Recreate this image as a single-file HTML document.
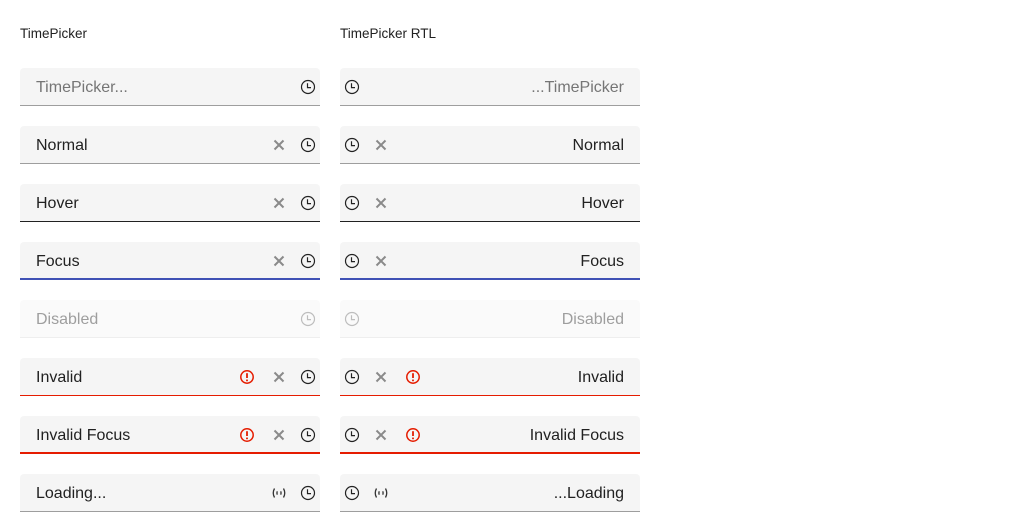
<!DOCTYPE html>
<html><head><meta charset="utf-8"><style>
*{margin:0;padding:0;box-sizing:border-box}
body{width:1024px;height:532px;background:#fff;font-family:"Liberation Sans",Arial,sans-serif;position:relative;overflow:hidden}
.lbl{position:absolute;top:26px;font-size:13.5px;color:#212121}
.f{position:absolute;width:300px;height:38px;background:#f5f5f5;border-radius:4px 4px 0 0;border-bottom:1px solid #9e9e9e;font-size:16px;color:#212121}
.f .t{position:absolute;top:11px;line-height:18px}
.l .t{left:16px}.r .t{right:16px}
.f svg{position:absolute;top:11px;width:16px;height:16px}
.hover{border-bottom-color:#212121}
.focus{border-bottom:2px solid #3f51b5}
.inv{border-bottom-color:#e51c00}
.invf{border-bottom:2px solid #e51c00}
.dis{background:#fafafa;border-bottom-color:#eee;color:#9e9e9e}
.ph{color:#757575}
</style></head><body>
<svg width="0" height="0" style="position:absolute">
<defs>
<symbol id="clk" viewBox="0 0 16 16"><circle cx="8" cy="8" r="6.5" fill="none" stroke="currentColor" stroke-width="1.2"/><path d="M7.5 4.2V8.6H11" fill="none" stroke="currentColor" stroke-width="1.2"/></symbol>
<symbol id="x" viewBox="0 0 16 16"><path d="M3.5 3.5L12.5 12.5M12.5 3.5L3.5 12.5" stroke="#8a8a8a" stroke-width="2"/></symbol>
<symbol id="err" viewBox="0 0 16 16"><circle cx="8" cy="8" r="6.2" fill="none" stroke="#e51c00" stroke-width="1.5"/><path d="M8 4.2V9" stroke="#e51c00" stroke-width="1.8"/><circle cx="8" cy="11.4" r="1" fill="#e51c00"/></symbol>
<symbol id="ld" viewBox="0 0 16 16"><path d="M3.5 3.5Q1 8 3.5 12.5M12.5 3.5Q15 8 12.5 12.5M6.3 6.3Q5.5 8 6.3 9.7M9.7 6.3Q10.5 8 9.7 9.7" fill="none" stroke="#333" stroke-width="1.3"/></symbol>
</defs></svg>
<div class="lbl" style="left:20px">TimePicker</div>
<div class="lbl" style="left:340px">TimePicker RTL</div>

<div class="f l" style="left:20px;top:68px"><span class="t ph">TimePicker...</span><svg style="left:280px;color:#222"><use href="#clk"/></svg></div>
<div class="f l" style="left:20px;top:126px"><span class="t">Normal</span><svg style="left:251px"><use href="#x"/></svg><svg style="left:280px;color:#222"><use href="#clk"/></svg></div>
<div class="f l hover" style="left:20px;top:184px"><span class="t">Hover</span><svg style="left:251px"><use href="#x"/></svg><svg style="left:280px;color:#222"><use href="#clk"/></svg></div>
<div class="f l focus" style="left:20px;top:242px"><span class="t">Focus</span><svg style="left:251px"><use href="#x"/></svg><svg style="left:280px;color:#222"><use href="#clk"/></svg></div>
<div class="f l dis" style="left:20px;top:300px"><span class="t">Disabled</span><svg style="left:280px;color:#bdbdbd"><use href="#clk"/></svg></div>
<div class="f l inv" style="left:20px;top:358px"><span class="t">Invalid</span><svg style="left:219px"><use href="#err"/></svg><svg style="left:251px"><use href="#x"/></svg><svg style="left:280px;color:#222"><use href="#clk"/></svg></div>
<div class="f l invf" style="left:20px;top:416px"><span class="t">Invalid Focus</span><svg style="left:219px"><use href="#err"/></svg><svg style="left:251px"><use href="#x"/></svg><svg style="left:280px;color:#222"><use href="#clk"/></svg></div>
<div class="f l" style="left:20px;top:474px"><span class="t">Loading...</span><svg style="left:251px"><use href="#ld"/></svg><svg style="left:280px;color:#222"><use href="#clk"/></svg></div>

<div class="f r" style="left:340px;top:68px"><span class="t ph">...TimePicker</span><svg style="left:4px;color:#222"><use href="#clk"/></svg></div>
<div class="f r" style="left:340px;top:126px"><span class="t">Normal</span><svg style="left:4px;color:#222"><use href="#clk"/></svg><svg style="left:33px"><use href="#x"/></svg></div>
<div class="f r hover" style="left:340px;top:184px"><span class="t">Hover</span><svg style="left:4px;color:#222"><use href="#clk"/></svg><svg style="left:33px"><use href="#x"/></svg></div>
<div class="f r focus" style="left:340px;top:242px"><span class="t">Focus</span><svg style="left:4px;color:#222"><use href="#clk"/></svg><svg style="left:33px"><use href="#x"/></svg></div>
<div class="f r dis" style="left:340px;top:300px"><span class="t">Disabled</span><svg style="left:4px;color:#bdbdbd"><use href="#clk"/></svg></div>
<div class="f r inv" style="left:340px;top:358px"><span class="t">Invalid</span><svg style="left:4px;color:#222"><use href="#clk"/></svg><svg style="left:33px"><use href="#x"/></svg><svg style="left:65px"><use href="#err"/></svg></div>
<div class="f r invf" style="left:340px;top:416px"><span class="t">Invalid Focus</span><svg style="left:4px;color:#222"><use href="#clk"/></svg><svg style="left:33px"><use href="#x"/></svg><svg style="left:65px"><use href="#err"/></svg></div>
<div class="f r" style="left:340px;top:474px"><span class="t">...Loading</span><svg style="left:4px;color:#222"><use href="#clk"/></svg><svg style="left:33px"><use href="#ld"/></svg></div>
</body></html>
